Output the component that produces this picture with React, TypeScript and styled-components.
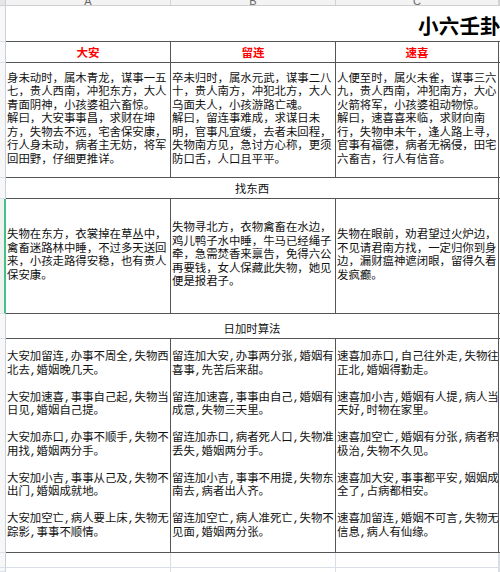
import React from "react";
import styled, { createGlobalStyle } from "styled-components";

const Global = createGlobalStyle`
  html, body { margin: 0; padding: 0; background: #ffffff; }
  body { font-family: "Noto Sans CJK SC", sans-serif; }
`;

const DARK = "#555555";
const LIGHT = "#d9dde6";

const Sheet = styled.div`
  width: 500px;
  height: 572px;
  overflow: hidden;
  display: grid;
  grid-template-columns: 6px 165px 165px 163px 1fr;
  grid-template-rows: 6px 36px 21px 115px 21px 115px 25px 214px 15px 1fr;
  background: #ffffff;
  color: #111111;
`;

const Corner = styled.div`
  box-sizing: border-box;
  background: #e6e6e6;
  border-right: 1px solid #c9d0e0;
  border-bottom: 1px solid #cfcfcf;
`;

const ColHead = styled.div`
  box-sizing: border-box;
  background: #f3f3f3;
  border-right: 1px solid #d2d2d2;
  border-bottom: 1px solid #cfcfcf;
  display: flex;
  align-items: flex-end;
  justify-content: center;
  overflow: hidden;
  font-family: "Liberation Sans", sans-serif;
  font-size: 11px;
  line-height: 8px;
  color: #666666;
`;

const RowHead = styled.div<{ $marked?: boolean }>`
  box-sizing: border-box;
  background: ${(p) => (p.$marked ? "#eef3ef" : "#f7f7f7")};
  border-right: ${(p) => (p.$marked ? "2px solid #45c08a" : "1px solid #c9d0e0")};
  border-bottom: 1px solid #dde1ea;
`;

const TitleCell = styled.div`
  grid-column: 2 / -1;
  box-sizing: border-box;
  border-bottom: 1px solid ${DARK};
  display: flex;
  align-items: center;
  padding: 3px 0 0 412px;
  overflow: hidden;
  white-space: nowrap;
  font-size: 20.5px;
  font-weight: 700;
  color: #000000;
  letter-spacing: 0.2px;
`;

const NameCell = styled.div`
  box-sizing: border-box;
  border-right: 1px solid ${DARK};
  border-bottom: 1px solid ${DARK};
  display: flex;
  align-items: center;
  justify-content: center;
  font-size: 11.5px;
  font-weight: 700;
  color: #ff0000;
`;

const TextCell = styled.div`
  box-sizing: border-box;
  border-right: 1px solid ${DARK};
  border-bottom: 1px solid ${DARK};
  display: flex;
  flex-direction: column;
  justify-content: center;
  padding-left: 1px;
  overflow: hidden;
  font-family: "Liberation Mono", "Noto Sans CJK SC", monospace;
  font-size: 11.4px;
`;

const Line = styled.div`
  height: 13.5px;
  line-height: 13.5px;
  white-space: pre;
`;

const BandCell = styled.div`
  grid-column: 2 / 5;
  box-sizing: border-box;
  border-right: 1px solid ${DARK};
  border-bottom: 1px solid ${DARK};
  display: flex;
  align-items: flex-end;
  justify-content: center;
  padding-bottom: 3px;
  font-size: 11.4px;
  line-height: 13.5px;
`;

const EdgeCell = styled.div`
  box-sizing: border-box;
  border-bottom: 1px solid ${DARK};
`;

const BlankCell = styled.div<{ $last?: boolean }>`
  box-sizing: border-box;
  border-right: 1px solid ${LIGHT};
  border-bottom: ${(p) => (p.$last ? "none" : `1px solid ${LIGHT}`)};
`;

const fortune: string[][] = [
  [
    "身未动时，属木青龙，谋事一五",
    "七，贵人西南，冲犯东方，大人",
    "青面阴神，小孩婆祖六畜惊。",
    "解曰，大安事事昌，求财在坤",
    "方，失物去不远，宅舍保安康，",
    "行人身未动，病者主无妨，将军",
    "回田野，仔细更推详。",
  ],
  [
    "卒未归时，属水元武，谋事二八",
    "十，贵人南方，冲犯北方，大人",
    "乌面夫人，小孩游路亡魂。",
    "解曰，留连事难成，求谋日未",
    "明，官事凡宜缓，去者未回程，",
    "失物南方见，急讨方心称，更须",
    "防口舌，人口且平平。",
  ],
  [
    "人便至时，属火未雀，谋事三六",
    "九，贵人西南，冲犯南方，大心",
    "火箭将军，小孩婆祖动物惊。",
    "解曰，速喜喜来临，求财向南",
    "行，失物申未午，逢人路上寻，",
    "官事有福德，病者无祸侵，田宅",
    "六畜吉，行人有信音。",
  ],
];

const lost: string[][] = [
  [
    "失物在东方，衣裳掉在草丛中，",
    "禽畜迷路林中睡，不过多天送回",
    "来，小孩走路得安稳，也有贵人",
    "保安康。",
  ],
  [
    "失物寻北方，衣物禽畜在水边，",
    "鸡儿鸭子水中睡，牛马已经绳子",
    "牵，急需焚香来禀告，免得六公",
    "再要钱，女人保藏此失物，她见",
    "便是报君子。",
  ],
  [
    "失物在眼前，劝君望过火炉边，",
    "不见请君南方找，一定归你到身",
    "边，漏财瘟神遮闭眼，留得久看",
    "发疯癫。",
  ],
];

const combos: string[][] = [
  [
    "大安加留连,办事不周全,失物西",
    "北去,婚姻晚几天。",
    "",
    "大安加速喜,事事自己起,失物当",
    "日见,婚姻自己提。",
    "",
    "大安加赤口,办事不顺手,失物不",
    "用找,婚姻两分手。",
    "",
    "大安加小吉,事事从己及,失物不",
    "出门,婚姻成就地。",
    "",
    "大安加空亡,病人要上床,失物无",
    "踪影,事事不顺情。",
  ],
  [
    "留连加大安,办事两分张,婚姻有",
    "喜事,先苦后来甜。",
    "",
    "留连加速喜,事事由自己,婚姻有",
    "成意,失物三天里。",
    "",
    "留连加赤口,病者死人口,失物准",
    "丢失,婚姻两分手。",
    "",
    "留连加小吉,事事不用提,失物东",
    "南去,病者出人齐。",
    "",
    "留连加空亡,病人准死亡,失物不",
    "见面,婚姻两分张。",
  ],
  [
    "速喜加赤口,自己往外走,失物往",
    "正北,婚姻得勤走。",
    "",
    "速喜加小吉,婚姻有人提,病人当",
    "天好,时物在家里。",
    "",
    "速喜加空亡,婚姻有分张,病者积",
    "极治,失物不久见。",
    "",
    "速喜加大安,事事都平安,姻姻成",
    "全了,占病都相安。",
    "",
    "速喜加留连,婚姻不可言,失物无",
    "信息,病人有仙缘。",
  ],
];

const TextRow: React.FC<{ cols: string[][] }> = ({ cols }) => (
  <>
    {cols.map((lines, i) => (
      <TextCell key={i}>
        {lines.map((l, j) => (
          <Line key={j}>{l === "" ? "\u00a0" : l}</Line>
        ))}
      </TextCell>
    ))}
    <EdgeCell />
  </>
);

export default function App() {
  return (
    <>
      <Global />
      <Sheet>
        <Corner />
        <ColHead>A</ColHead>
        <ColHead>B</ColHead>
        <ColHead>C</ColHead>
        <ColHead />

        <RowHead />
        <TitleCell>小六壬卦</TitleCell>

        <RowHead />
        <NameCell>大安</NameCell>
        <NameCell>留连</NameCell>
        <NameCell>速喜</NameCell>
        <EdgeCell />

        <RowHead />
        <TextRow cols={fortune} />

        <RowHead />
        <BandCell>找东西</BandCell>
        <EdgeCell />

        <RowHead $marked />
        <TextRow cols={lost} />

        <RowHead />
        <BandCell>日加时算法</BandCell>
        <EdgeCell />

        <RowHead />
        <TextRow cols={combos} />

        <RowHead />
        <BlankCell />
        <BlankCell />
        <BlankCell />
        <BlankCell />

        <RowHead />
        <BlankCell $last />
        <BlankCell $last />
        <BlankCell $last />
        <BlankCell $last />
      </Sheet>
    </>
  );
}
